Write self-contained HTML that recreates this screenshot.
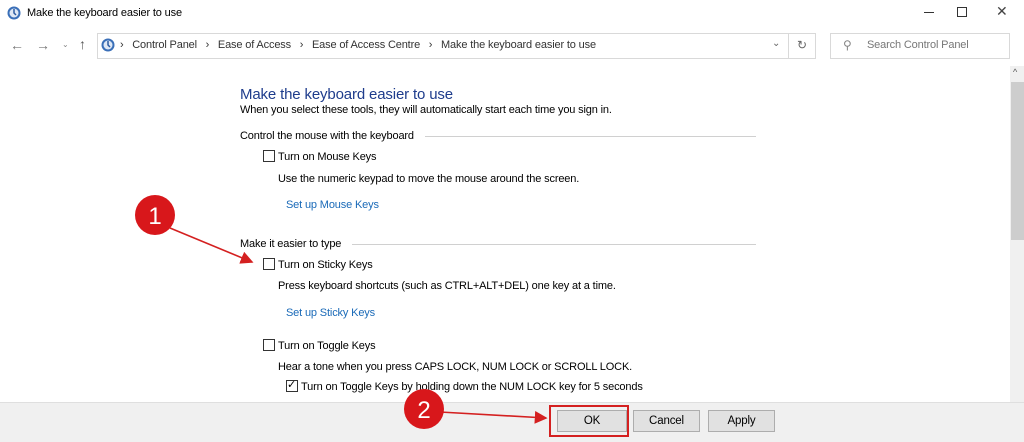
<!DOCTYPE html>
<html><head><meta charset="utf-8"><style>
*{margin:0;padding:0;box-sizing:border-box}
body{width:1024px;height:442px;overflow:hidden;background:#fff;font-family:"Liberation Sans",sans-serif;font-size:11px;color:#000;position:relative;letter-spacing:-0.15px}
.a{position:absolute;white-space:nowrap}
.t{margin-top:1px}
.cb{position:absolute;width:12px;height:12px;border:1px solid #333;background:#fff}
.lnk{color:#1a6ab8}
.hl{position:absolute;height:1px;background:#d0d0d0}
.btn{position:absolute;height:22px;border:1px solid #adadad;background:#e1e1e1;text-align:center;line-height:20px;font-size:11.5px}
</style></head><body>
<svg class="a" style="left:7px;top:6px" width="14" height="14" viewBox="0 0 14 14"><circle cx="7" cy="7" r="6.5" fill="#3a6fb8"/><circle cx="7" cy="7" r="4.5" fill="#dfe8f5"/><path d="M7 3v4l2 2" stroke="#2b5aa0" stroke-width="1.5" fill="none"/></svg>
<div class="a" style="left:27px;top:7px;font-size:11px">Make the keyboard easier to use</div>
<div class="a" style="left:924px;top:12px;width:10px;height:1px;background:#333"></div>
<div class="a" style="left:957px;top:7px;width:10px;height:10px;border:1px solid #333"></div>
<div class="a" style="left:996px;top:3px;font-size:14px;color:#444">✕</div>
<div class="a" style="left:10px;top:37px;font-size:14px;color:#777">←</div>
<div class="a" style="left:36px;top:37px;font-size:14px;color:#777">→</div>
<div class="a" style="left:62px;top:40px;font-size:8px;color:#888">⌄</div>
<div class="a" style="left:79px;top:36px;font-size:14px;color:#555">↑</div>
<div class="a" style="left:97px;top:33px;width:692px;height:26px;border:1px solid #d9d9d9"></div>
<div class="a" style="left:788px;top:33px;width:28px;height:26px;border:1px solid #d9d9d9"></div>
<svg class="a" style="left:101px;top:38px" width="14" height="14" viewBox="0 0 14 14"><circle cx="7" cy="7" r="6.5" fill="#3a6fb8"/><circle cx="7" cy="7" r="4.5" fill="#dfe8f5"/><path d="M7 3v4l2 2" stroke="#2b5aa0" stroke-width="1.5" fill="none"/></svg>
<div class="a" style="left:120px;top:39px;color:#333">›&nbsp;&nbsp; Control Panel &nbsp;&nbsp;›&nbsp;&nbsp; Ease of Access &nbsp;&nbsp;›&nbsp;&nbsp; Ease of Access Centre &nbsp;&nbsp;›&nbsp;&nbsp; Make the keyboard easier to use</div>
<div class="a" style="left:772px;top:38px;font-size:10px;color:#666">⌄</div>
<div class="a" style="left:797px;top:38px;font-size:12px;color:#666">↻</div>
<div class="a" style="left:830px;top:33px;width:180px;height:26px;border:1px solid #d9d9d9"></div>
<div class="a" style="left:843px;top:38px;font-size:12px;color:#888">⚲</div>
<div class="a" style="left:867px;top:39px;color:#777">Search Control Panel</div>
<div class="a" style="left:1010px;top:66px;width:14px;height:337px;background:#f0f0f0"></div>
<div class="a" style="left:1013px;top:67px;font-size:9px;color:#555">^</div>
<div class="a" style="left:1011px;top:82px;width:13px;height:158px;background:#cdcdcd"></div>
<div class="a" style="left:240px;top:86px;font-size:15px;color:#1e3c8c">Make the keyboard easier to use</div>
<div class="a t" style="left:240px;top:103px">When you select these tools, they will automatically start each time you sign in.</div>
<div class="a t" style="left:240px;top:129px">Control the mouse with the keyboard</div>
<div class="hl" style="left:425px;top:136px;width:331px"></div>
<div class="cb" style="left:263px;top:150px"></div>
<div class="a t" style="left:278px;top:150px">Turn on Mouse Keys</div>
<div class="a t" style="left:278px;top:172px">Use the numeric keypad to move the mouse around the screen.</div>
<div class="a t lnk" style="left:286px;top:198px">Set up Mouse Keys</div>
<div class="a t" style="left:240px;top:237px">Make it easier to type</div>
<div class="hl" style="left:352px;top:244px;width:404px"></div>
<div class="cb" style="left:263px;top:258px"></div>
<div class="a t" style="left:278px;top:258px">Turn on Sticky Keys</div>
<div class="a t" style="left:278px;top:279px">Press keyboard shortcuts (such as CTRL+ALT+DEL) one key at a time.</div>
<div class="a t lnk" style="left:286px;top:306px">Set up Sticky Keys</div>
<div class="cb" style="left:263px;top:339px"></div>
<div class="a t" style="left:278px;top:339px">Turn on Toggle Keys</div>
<div class="a t" style="left:278px;top:360px">Hear a tone when you press CAPS LOCK, NUM LOCK or SCROLL LOCK.</div>
<div class="cb" style="left:286px;top:380px"></div>
<div class="a" style="left:287px;top:378px;font-size:11px">✓</div>
<div class="a t" style="left:301px;top:380px">Turn on Toggle Keys by holding down the NUM LOCK key for 5 seconds</div>
<div class="a" style="left:0;top:402px;width:1024px;height:40px;background:#f0f0f0;border-top:1px solid #dfdfdf"></div>
<div class="btn" style="left:557px;top:410px;width:70px">OK</div>
<div class="a" style="left:549px;top:405px;width:80px;height:32px;border:2px solid #d42020"></div>
<div class="btn" style="left:633px;top:410px;width:67px">Cancel</div>
<div class="btn" style="left:708px;top:410px;width:67px">Apply</div>
<svg class="a" style="left:0;top:0" width="1024" height="442">
<defs><marker id="ar" markerWidth="8" markerHeight="8" refX="7" refY="4" orient="auto"><path d="M0 0L8 4L0 8z" fill="#d42020"/></marker></defs>
<line x1="170" y1="228" x2="252" y2="262" stroke="#d42020" stroke-width="1.6" marker-end="url(#ar)"/>
<line x1="440" y1="412" x2="546" y2="418" stroke="#d42020" stroke-width="1.6" marker-end="url(#ar)"/>
<circle cx="155" cy="215" r="20" fill="#d8171b"/>
<text x="155" y="224" text-anchor="middle" font-family="Liberation Sans" font-size="24" fill="#fff">1</text>
<circle cx="424" cy="409" r="20" fill="#d8171b"/>
<text x="424" y="418" text-anchor="middle" font-family="Liberation Sans" font-size="24" fill="#fff">2</text>
</svg>
</body></html>
